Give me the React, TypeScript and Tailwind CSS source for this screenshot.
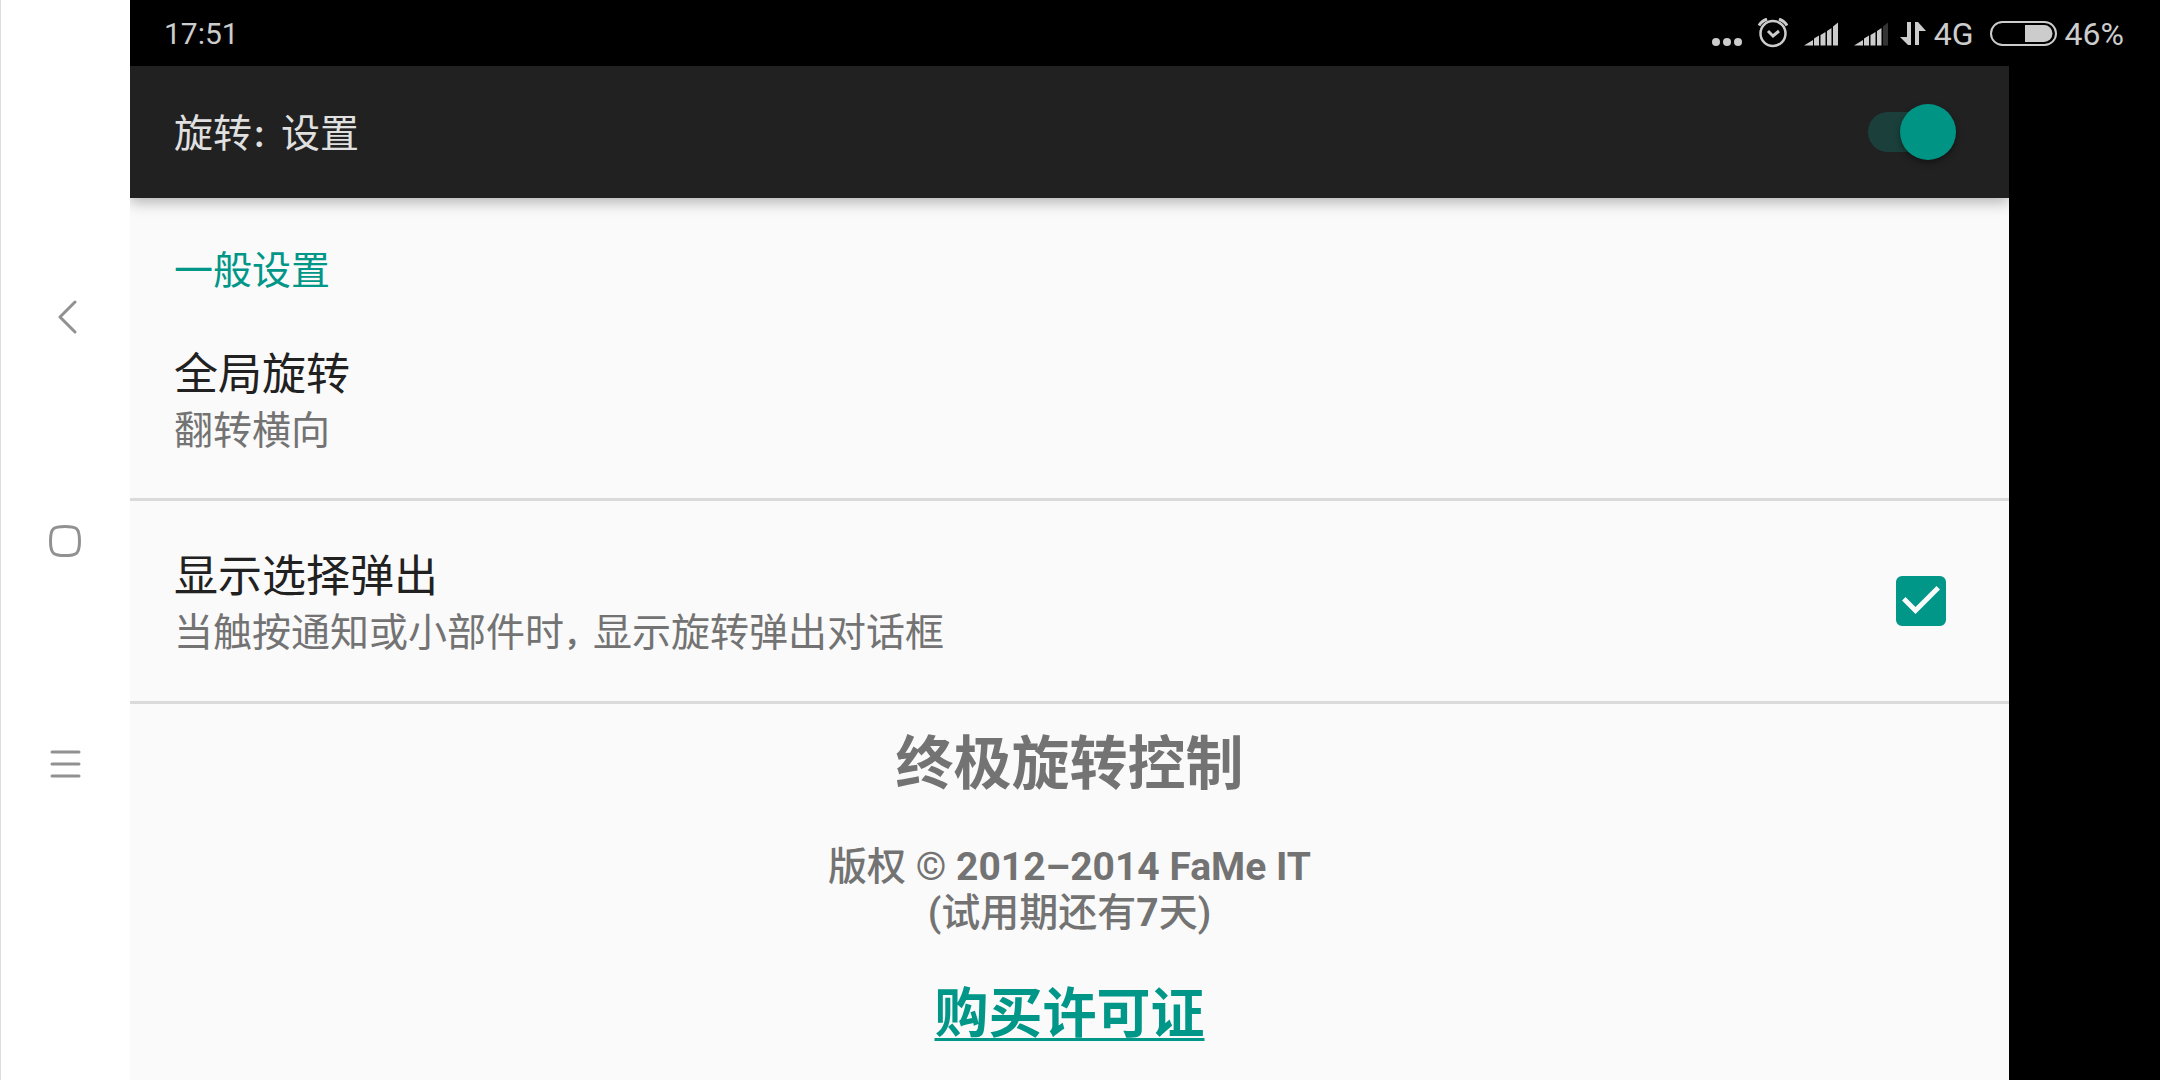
import { useState } from "react";
import type { ReactNode } from "react";

const navButtons = [
  { label: "返回", icon: <path d="M27 4 12 19l15 15" strokeLinecap="round" strokeLinejoin="round" /> },
  { label: "主屏幕", icon: <path d="M17 4.500c11 0 14.500 1 14.500 14.500S28 33.500 17 33.500 2.500 32.500 2.500 19 6 4.500 17 4.500Z" /> },
  { label: "菜单", icon: <path d="M4 6h27M4 18h27M4 30h27" strokeLinecap="round" /> },
];

// Full-width punctuation, set smaller than the characters around it
function Mark({ children }: { children: ReactNode }) {
  return <span className="text-[29px] font-bold">{children}</span>;
}

function NavBar() {
  return (
    <nav className="flex w-[130px] shrink-0 flex-col justify-center border-l border-[#ddd] bg-white">
      {navButtons.map((button) => (
        <button key={button.label} aria-label={button.label} className="flex h-56 w-full items-center justify-center">
          <svg className="size-9" viewBox="0 0 36 36" fill="none" stroke="#919191" strokeWidth={3}>
            {button.icon}
          </svg>
        </button>
      ))}
    </nav>
  );
}

function Signal({ weak }: { weak?: boolean }) {
  return (
    <svg className="h-8 w-[34px]" viewBox="0 0 34 32" fill="currentColor">
      <path d="M0 27.500 9 22v5.500ZM10 20.500l5-3v10h-5ZM16.500 17l5-3v13.500h-5ZM23 13l4.500-3v17.500H23Z" />
      <path d="m29 8.500 5-4v23h-5Z" fill={weak ? "#333" : "currentColor"} />
    </svg>
  );
}

function StatusBar() {
  return (
    <header className="flex h-[66px] items-center justify-between bg-black pt-px pr-9 pl-[34px] text-[#ccc]">
      <time className="text-[30px]">17:51</time>
      <div className="flex items-center text-[32px]">
        <svg className="mr-4 h-8 w-[30px]" viewBox="0 0 30 32" fill="currentColor">
          <circle cx="4" cy="24" r="4" />
          <circle cx="15" cy="24" r="4" />
          <circle cx="26" cy="24" r="4" />
        </svg>
        <svg className="mr-4 h-8 w-[30px]" viewBox="0 0 30 32" fill="none" stroke="currentColor" strokeWidth={2.5}>
          <circle cx="15" cy="15.500" r="12.500" />
          <path d="m10 13 5 5 6-5" strokeWidth={3} />
          <path d="M1 7.500q2-4 8-6.500M29 7.500q-2-4-8-6.500" strokeWidth={3} />
        </svg>
        <span className="mr-3 flex gap-4">
          <Signal />
          <Signal weak />
        </span>
        <svg className="mr-2 h-8 w-[26px]" viewBox="0 0 26 32" fill="currentColor">
          <path d="M7 4h4v23H8L0 19h7ZM15 4h3l8 9h-7v14h-4Z" />
        </svg>
        <span className="mr-4">4G</span>
        <svg className="mr-2 h-8 w-[67px]" viewBox="0 0 67 32" fill="none">
          <rect x="1" y="4" width="65" height="23" rx="11.500" stroke="currentColor" strokeWidth={2} />
          <path d="M35 7h19a8.500 8.500 0 0 1 0 17H35Z" fill="currentColor" />
        </svg>
        <span>46%</span>
      </div>
    </header>
  );
}

function Preference({ title, summary, children }: { title: string; summary: ReactNode; children?: ReactNode }) {
  return (
    <label className="flex h-[203px] items-center justify-between border-b-[3px] border-[#dadada] pr-[63px] pl-11">
      <span className="flex flex-col pt-2">
        <span className="text-[44px] leading-[58px] text-[#212121]">{title}</span>
        <span className="text-[39px] leading-[54px] text-[#737373]">{summary}</span>
      </span>
      {children}
    </label>
  );
}

export default function App() {
  const [enabled, setEnabled] = useState(true);
  const [popup, setPopup] = useState(true);

  return (
    <div className="flex min-h-screen bg-black font-[Roboto,'Noto_Sans_CJK_SC',sans-serif]">
      <NavBar />
      <div className="flex min-w-0 flex-1 flex-col">
        <StatusBar />
        <main className="mr-[151px] flex-1 overflow-hidden bg-[#fafafa]">
          {/* Action bar */}
          <div className="flex h-[132px] items-center justify-between bg-[#212121] pr-[53px] pl-11 shadow-[0_4px_14px_rgba(0,0,0,0.3)]">
            <h1 className="pt-1 text-[39px] text-[#e0e0e0]">
              旋转<Mark>：</Mark>设置
            </h1>
            <input
              type="checkbox"
              role="switch"
              aria-label="旋转"
              checked={enabled}
              onChange={(e) => setEnabled(e.target.checked)}
              className="relative h-14 w-[88px] appearance-none before:absolute before:top-2 before:left-0 before:h-10 before:w-[76px] before:rounded-full before:bg-[#444] after:absolute after:top-0 after:left-0 after:size-14 after:rounded-full after:bg-[#bdbdbd] after:shadow-[0_3px_6px_rgba(0,0,0,0.4)] checked:before:bg-[#1b403c] checked:after:left-8 checked:after:bg-[#009485]"
            />
          </div>

          {/* Preferences */}
          <h2 className="flex h-[100px] items-end pl-11 text-[39px] leading-[54px] text-[#009688]">一般设置</h2>
          <Preference title="全局旋转" summary="翻转横向" />
          <Preference title="显示选择弹出" summary={<>当触按通知或小部件时<Mark>，</Mark>显示旋转弹出对话框</>}>
            <span className="grid shrink-0">
              <input
                type="checkbox"
                checked={popup}
                onChange={(e) => setPopup(e.target.checked)}
                className="peer col-start-1 row-start-1 size-[50px] appearance-none rounded-md border-4 border-[#737373] checked:border-[#009688] checked:bg-[#009688]"
              />
              <svg className="pointer-events-none invisible col-start-1 row-start-1 size-[50px] peer-checked:visible" viewBox="0 0 50 50" fill="#fafafa">
                <path d="m6 24.500 3.500-3.500 10 10 21-21 3.500 3.500L19.500 38Z" />
              </svg>
            </span>
          </Preference>

          {/* About */}
          <footer className="flex flex-col items-center pt-[18px] text-center font-bold text-[#737373]">
            <h2 className="text-[58px] leading-[84px]">终极旋转控制</h2>
            <p className="mt-[38px] text-[39px] leading-[46px]">
              <span className="font-medium">版权 ©</span> 2012–2014 FaMe IT
              <br />
              <span className="font-medium">(试用期还有</span>7<span className="font-medium">天)</span>
            </p>
            <a href="#license" className="mt-10 text-[54px] leading-[78px] text-[#009688] underline decoration-3 underline-offset-5">
              购买许可证
            </a>
          </footer>
        </main>
      </div>
    </div>
  );
}
